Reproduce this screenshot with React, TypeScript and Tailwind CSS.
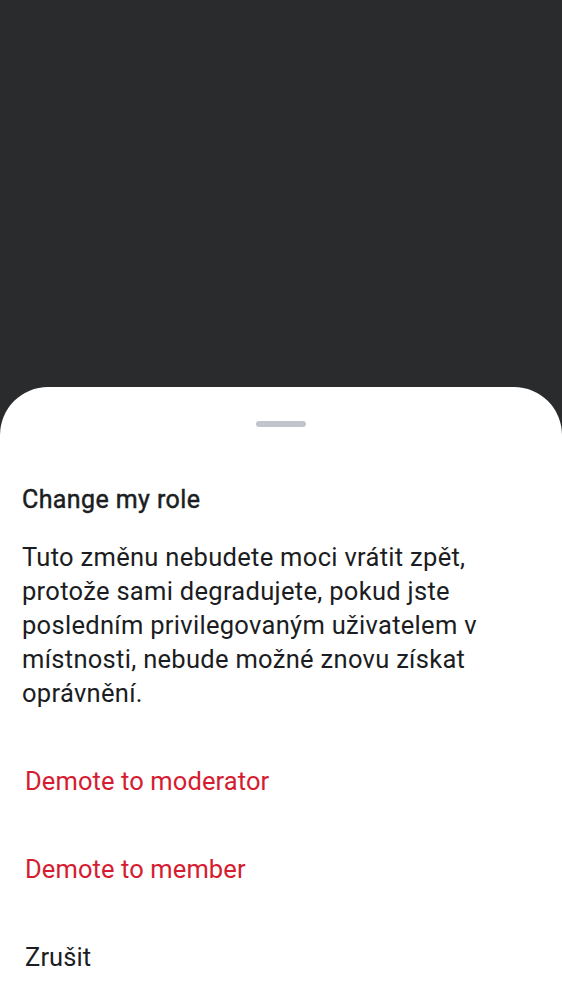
export default function App() {
  return (
    <div className="w-[562px] h-[1000px] bg-[#2a2b2d] flex flex-col overflow-hidden" style={{ fontFamily: "Roboto, 'Noto Sans', sans-serif" }}>
      <div className="h-[387px] shrink-0" />
      <div className="flex-1 bg-white rounded-t-[48px] flex flex-col">
        <div className="flex justify-center pt-[34px]">
          <div className="w-[50px] h-[6px] rounded-full bg-[#c1c5cb]" />
        </div>
        <div className="px-[22px] pt-[58px]">
          <h2 className="text-[25px] leading-[30px] font-normal tracking-[0.4px] [-webkit-text-stroke:0.45px_#1b1d22] text-[#1b1d22]">Change my role</h2>
          <p className="mt-[25px] text-[25.5px] leading-[34px] tracking-[0.3px] text-[#1b1d22]">
            Tuto změnu nebudete moci vrátit zpět, protože sami degradujete, pokud jste posledním privilegovaným uživatelem v místnosti, nebude možné znovu získat oprávnění.
          </p>
        </div>
        <div className="flex flex-col mt-[27px] px-[25px]">
          <button className="h-[88px] text-left text-[25.5px] tracking-[0.1px] text-[#d51c31]">Demote to moderator</button>
          <button className="h-[88px] text-left text-[25.5px] tracking-[0.1px] text-[#d51c31]">Demote to member</button>
          <button className="h-[88px] text-left text-[25.5px] tracking-[0.1px] text-[#1b1d22]">Zrušit</button>
        </div>
      </div>
    </div>
  );
}
